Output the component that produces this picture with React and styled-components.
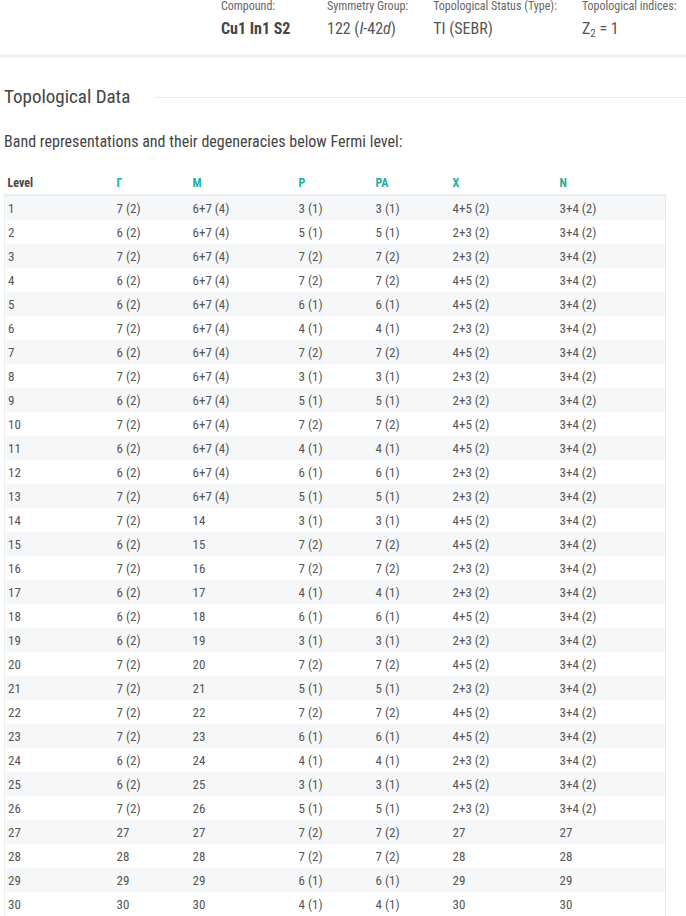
import React from "react";
import styled, { createGlobalStyle } from "styled-components";

const GlobalStyle = createGlobalStyle`
  body { margin: 0; background: #fff; font-family: 'Roboto Condensed', Roboto, sans-serif; color: #555; }
`;

const Page = styled.div`
  width: 686px;
  overflow: hidden;
`;

const InfoBar = styled.div`
  display: flex;
  gap: 25px;
  padding: 0 0 0 221px;
  height: 58px;
  border-bottom: 4px solid #f3f3f3;
  box-sizing: border-box;
  white-space: nowrap;
`;

const InfoItem = styled.div`
  display: flex;
  flex-direction: column;
  min-width: 81px;
`;

const InfoLabel = styled.div`
  font-size: 12px;
  line-height: 13px;
  color: #666;
`;

const InfoValue = styled.div`
  font-size: 16px;
  line-height: 20px;
  margin-top: 6px;
  color: #555;
  font-weight: ${p => (p.$bold ? 700 : 400)};
  ${p => p.$bold && "color: #444;"}
`;

const Sub = styled.sub`
  font-size: 11px;
  line-height: 0;
  vertical-align: -3px;
`;

const Content = styled.div`
  padding: 28px 4px 0 4px;
`;

const SectionTitle = styled.div`
  display: flex;
  align-items: center;
  gap: 24px;
  font-size: 19px;
  line-height: 22px;
  color: #444;
  &::after {
    content: "";
    flex: 1;
    height: 1px;
    background: #ececec;
    margin-right: -4px;
  }
`;

const Subtitle = styled.p`
  margin: 24px 0 0;
  font-size: 16px;
  line-height: 20px;
  color: #444;
`;

const Table = styled.table`
  margin-top: 19px;
  width: 661px;
  border-collapse: collapse;
  table-layout: fixed;
  font-size: 13px;
`;

const Col = styled.col`
  width: ${p => p.$w}px;
`;

const HeadCell = styled.th`
  text-align: left;
  font-weight: 700;
  font-size: 12px;
  height: 23px;
  padding: 0 3px;
  color: ${p => (p.$accent ? "#1fae9f" : "#444")};
  border-bottom: 2px solid #e9ecee;
`;

const Row = styled.tr`
  background: ${p => (p.$odd ? "#f5f7f8" : "#fff")};
`;

const Cell = styled.td`
  height: 24px;
  padding: 0 3px;
  color: #555;
  white-space: nowrap;
  &:first-child { border-left: 1px solid #eceeef; }
  &:last-child { border-right: 1px solid #e5e7e8; }
`;

const cols = [
  { label: "Level", w: 109 },
  { label: "Γ", w: 76, accent: true },
  { label: "M", w: 106, accent: true },
  { label: "P", w: 77, accent: true },
  { label: "PA", w: 77, accent: true },
  { label: "X", w: 107, accent: true },
  { label: "N", w: 109, accent: true },
];

const raw = `7 (2)|6+7 (4)|3 (1)|3 (1)|4+5 (2)|3+4 (2)
6 (2)|6+7 (4)|5 (1)|5 (1)|2+3 (2)|3+4 (2)
7 (2)|6+7 (4)|7 (2)|7 (2)|2+3 (2)|3+4 (2)
6 (2)|6+7 (4)|7 (2)|7 (2)|4+5 (2)|3+4 (2)
6 (2)|6+7 (4)|6 (1)|6 (1)|4+5 (2)|3+4 (2)
7 (2)|6+7 (4)|4 (1)|4 (1)|2+3 (2)|3+4 (2)
6 (2)|6+7 (4)|7 (2)|7 (2)|4+5 (2)|3+4 (2)
7 (2)|6+7 (4)|3 (1)|3 (1)|2+3 (2)|3+4 (2)
6 (2)|6+7 (4)|5 (1)|5 (1)|2+3 (2)|3+4 (2)
7 (2)|6+7 (4)|7 (2)|7 (2)|4+5 (2)|3+4 (2)
6 (2)|6+7 (4)|4 (1)|4 (1)|4+5 (2)|3+4 (2)
6 (2)|6+7 (4)|6 (1)|6 (1)|2+3 (2)|3+4 (2)
7 (2)|6+7 (4)|5 (1)|5 (1)|2+3 (2)|3+4 (2)
7 (2)|14|3 (1)|3 (1)|4+5 (2)|3+4 (2)
6 (2)|15|7 (2)|7 (2)|4+5 (2)|3+4 (2)
7 (2)|16|7 (2)|7 (2)|2+3 (2)|3+4 (2)
6 (2)|17|4 (1)|4 (1)|2+3 (2)|3+4 (2)
6 (2)|18|6 (1)|6 (1)|4+5 (2)|3+4 (2)
6 (2)|19|3 (1)|3 (1)|2+3 (2)|3+4 (2)
7 (2)|20|7 (2)|7 (2)|4+5 (2)|3+4 (2)
7 (2)|21|5 (1)|5 (1)|2+3 (2)|3+4 (2)
7 (2)|22|7 (2)|7 (2)|4+5 (2)|3+4 (2)
7 (2)|23|6 (1)|6 (1)|4+5 (2)|3+4 (2)
6 (2)|24|4 (1)|4 (1)|2+3 (2)|3+4 (2)
6 (2)|25|3 (1)|3 (1)|4+5 (2)|3+4 (2)
7 (2)|26|5 (1)|5 (1)|2+3 (2)|3+4 (2)
27|27|7 (2)|7 (2)|27|27
28|28|7 (2)|7 (2)|28|28
29|29|6 (1)|6 (1)|29|29
30|30|4 (1)|4 (1)|30|30`;

const rows = raw.split("\n").map((l, i) => [String(i + 1), ...l.split("|")]);

export default function App() {
  return (
    <Page>
      <GlobalStyle />
      <InfoBar>
        <InfoItem>
          <InfoLabel>Compound:</InfoLabel>
          <InfoValue $bold>Cu1 In1 S2</InfoValue>
        </InfoItem>
        <InfoItem>
          <InfoLabel>Symmetry Group:</InfoLabel>
          <InfoValue>122 (<i>I</i>-42<i>d</i>)</InfoValue>
        </InfoItem>
        <InfoItem>
          <InfoLabel>Topological Status (Type):</InfoLabel>
          <InfoValue>TI (SEBR)</InfoValue>
        </InfoItem>
        <InfoItem>
          <InfoLabel>Topological indices:</InfoLabel>
          <InfoValue>Z<Sub>2</Sub> = 1</InfoValue>
        </InfoItem>
      </InfoBar>
      <Content>
        <SectionTitle>Topological Data</SectionTitle>
        <Subtitle>Band representations and their degeneracies below Fermi level:</Subtitle>
        <Table>
          <colgroup>
            {cols.map(c => <Col key={c.label} $w={c.w} />)}
          </colgroup>
          <thead>
            <tr>
              {cols.map(c => (
                <HeadCell key={c.label} $accent={c.accent}>{c.label}</HeadCell>
              ))}
            </tr>
          </thead>
          <tbody>
            {rows.map((r, i) => (
              <Row key={i} $odd={i % 2 === 0}>
                {r.map((v, j) => <Cell key={j}>{v}</Cell>)}
              </Row>
            ))}
          </tbody>
        </Table>
      </Content>
    </Page>
  );
}
